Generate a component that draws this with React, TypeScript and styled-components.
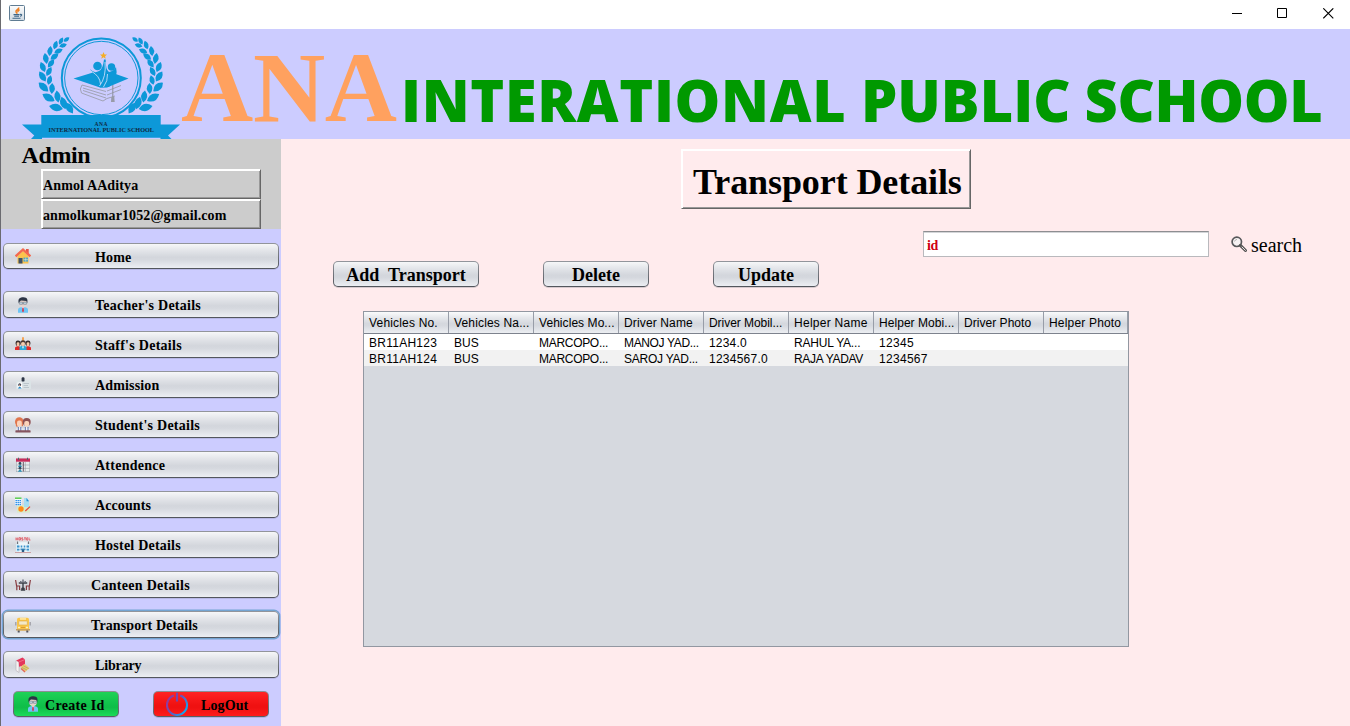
import React from "react";
import styled, { createGlobalStyle, css } from "styled-components";

const serif = `"Liberation Serif", "Times New Roman", serif`;
const sans = `"Liberation Sans", Arial, sans-serif`;

const GlobalStyle = createGlobalStyle`
  * { box-sizing: border-box; }
  body { margin: 0; background: #fff; overflow: hidden; }
`;

const Window = styled.div`
  width: 1350px;
  height: 726px;
  display: flex;
  flex-direction: column;
  background: #fff;
  border-left: 1px solid #6b6b70;
  font-family: ${serif};
  color: #000;
  white-space: pre;
`;

const TitleBar = styled.div`
  height: 29px;
  flex: none;
  display: flex;
  justify-content: space-between;
  padding: 5px 16px 0 8px;
`;

const WindowControls = styled.div`
  display: flex;
  gap: 35px;
  padding-top: 3px;
`;

const Header = styled.header`
  height: 110px;
  flex: none;
  display: flex;
  align-items: flex-start;
  background: #ccccff;
  padding-left: 20px;
`;

const BrandShort = styled.div`
  flex: none;
  width: 220px;
  margin-top: 10px;
  font: bold 100px/98px ${serif};
  letter-spacing: -0.3px;
  color: #ffa15f;
`;

const BrandLong = styled.div`
  flex: none;
  margin-top: 36px;
  font: 800 57.5px/70px "Open Sans", sans-serif;
  word-spacing: -1px;
  color: #009900;
`;

const BrandWord = styled.span<{ $track: number }>`
  letter-spacing: ${(p) => p.$track}px;
`;

const Body = styled.div`
  flex: 1;
  display: flex;
  min-height: 0;
`;

const Sidebar = styled.aside`
  width: 280px;
  flex: none;
  background: #ccccff;
`;

const Profile = styled.div`
  height: 90px;
  background: #cccccc;
  padding-left: 20px;
`;

const Role = styled.div`
  height: 30px;
  padding-left: 0.5px;
  font: bold 24px/32px ${serif};
  letter-spacing: -0.4px;
`;

const bevel = css`
  border-style: solid;
  border-width: 1px;
  border-color: #fff #666 #666 #fff;
  box-shadow: inset 1px 1px 0 #fff, inset -1px -1px 0 #999;
`;

const ProfileField = styled.div`
  ${bevel}
  margin-left: 20px;
  width: 220px;
  height: 30px;
  padding: 2px 0 0 1px;
  font: bold 14px/28px ${serif};
  letter-spacing: 0.12px;
`;

const Nav = styled.nav`
  display: flex;
  flex-direction: column;
  gap: 13px;
  padding: 14px 2px 0;
`;

const steel = css`
  background: linear-gradient(#f6f7f8 0%, #e4e6ea 25%, #d3d6dc 55%, #d5d8de 65%, #eceef3 100%) padding-box,
    linear-gradient(#93969c, #51555c) border-box;
`;

const NavButton = styled.button<{ $first?: boolean; $focused?: boolean }>`
  ${steel}
  width: 276px;
  height: ${(p) => (p.$first ? 26 : 27)}px;
  margin: 0 0 ${(p) => (p.$first ? 9 : 0)}px;
  padding: 0 0 0 11px;
  border: 1px solid transparent;
  border-radius: 5px;
  display: flex;
  align-items: center;
  text-align: left;
  font: bold 14px/24px ${serif};
  color: #000;
  box-shadow: ${(p) => (p.$focused ? "0 0 0 1.4px #73a4d1" : "0 1px 0 rgba(120,120,160,.25)")};
  > span { padding-top: ${(p) => (p.$first ? 3 : 2)}px; }
`;

const NavLabel = styled.span<{ $indent: number; $track: number }>`
  margin-left: ${(p) => p.$indent}px;
  letter-spacing: ${(p) => p.$track}px;
`;

const AccountActions = styled.div`
  display: flex;
  gap: 34px;
  padding: 13px 0 0 12px;
`;

const AccountButton = styled.button<{ $tone: "green" | "red" }>`
  width: ${(p) => (p.$tone === "green" ? 106 : 116)}px;
  height: 26px;
  margin: 0;
  padding: ${(p) => (p.$tone === "green" ? "0 0 0 11px" : "0 0 0 12px")};
  display: flex;
  align-items: center;
  gap: ${(p) => (p.$tone === "green" ? 4 : 12)}px;
  border: 1px solid transparent;
  border-radius: 5px;
  font: bold 14px/26px ${serif};
  letter-spacing: ${(p) => (p.$tone === "green" ? 0.3 : 0.1)}px;
  background: ${(p) =>
      p.$tone === "green"
        ? "linear-gradient(#1fd257, #0fc04a 55%, #10bd49 65%, #1bdc5a)"
        : "linear-gradient(#ff2323, #f01111 55%, #ef1111 65%, #ff1c1c)"} padding-box,
    linear-gradient(#8d8f94, #5a5d63) border-box;
  box-shadow: 0 1px 0 rgba(120, 120, 160, 0.3);
  color: #000;
  span { padding-top: 4px; }
`;

const Content = styled.main`
  flex: 1;
  background: #ffebed;
  display: flex;
  flex-direction: column;
  align-items: flex-start;
`;

const PageTitle = styled.h1`
  ${bevel}
  margin: 10px 0 0 400px;
  width: 290px;
  height: 60px;
  padding: 5px 0 0 11px;
  font: bold 36px/55px ${serif};
  letter-spacing: -0.09px;
`;

const SearchRow = styled.div`
  margin: 22px 0 0 642px;
  height: 26px;
  display: flex;
`;

const SearchField = styled.div`
  width: 286px;
  height: 26px;
  padding: 1px 0 0 3px;
  background: #fff;
  border: 1px solid #b9b9bd;
  border-top-color: #8d8e91;
  box-shadow: inset 0 1px 0 #d4d5d8;
  font: bold 14px/26px ${serif};
  letter-spacing: -0.4px;
  color: #d00012;
`;

const SearchAction = styled.div`
  margin-left: 22px;
  display: flex;
  align-items: flex-start;
  gap: 4px;
  font: 20px/28px ${serif};
  svg { margin-top: 5px; }
`;

const Toolbar = styled.div`
  margin: 4px 0 0 52px;
  display: flex;
  gap: 64px;
`;

const ToolButton = styled.button<{ $wide?: boolean }>`
  ${steel}
  width: ${(p) => (p.$wide ? 146 : 106)}px;
  height: 26px;
  padding: 3px 0 0;
  border: 1px solid transparent;
  border-radius: 5px;
  font: bold 18px/21px ${serif};
  letter-spacing: 0;
  white-space: pre;
  color: #000;
  box-shadow: 0 1px 0 rgba(140, 140, 150, 0.35);
`;

const TableFrame = styled.div`
  margin: 24px 0 0 82px;
  width: 766px;
  height: 336px;
  border: 1px solid #9297a1;
  background: #d6d9df;
  font: 12px/16px ${sans};
`;

const TableHead = styled.div`
  display: grid;
  grid-template-columns: repeat(8, 85px) 84px;
  height: 22px;
  border-bottom: 1px solid #7d828d;
  background: linear-gradient(#fafbfc 0%, #e5e7eb 28%, #d5d8de 55%, #d6d9df 65%, #eceef2 100%);
`;

const HeadCell = styled.div<{ $track: number }>`
  padding: 2px 0 0 5px;
  line-height: 19px;
  border-right: 1px solid #989da8;
  letter-spacing: ${(p) => p.$track}px;
`;

const TableRow = styled.div<{ $alt?: boolean }>`
  display: grid;
  grid-template-columns: repeat(8, 85px) 84px;
  height: 16px;
  background: ${(p) => (p.$alt ? "#f2f2f2" : "#fff")};
`;

const Cell = styled.div<{ $track: number }>`
  padding: 2px 0 0 5px;
  line-height: 14px;
  letter-spacing: ${(p) => p.$track}px;
`;

const Icon = ({ children, size = 16 }: { children: React.ReactNode; size?: number }) => (
  <svg width={size} height={size} viewBox="0 0 16 16" style={{ flex: "none" }}>{children}</svg>
);

const JavaIcon = () => (
  <Icon>
    <defs>
      <linearGradient id="jbg" x1="0" y1="0" x2="0" y2="1">
        <stop offset="0" stopColor="#fdfdfd" /><stop offset="1" stopColor="#cfd9e2" />
      </linearGradient>
    </defs>
    <rect x=".5" y=".5" width="15" height="15" rx="1" fill="url(#jbg)" stroke="#5f7c93" />
    <path d="M9.8 2.5C10 4.600 6.300 4.800 7 6.800 7.300 7.800 8 8 8 8.800M10.600 4.800C8.800 5.500 8.600 6.200 9.200 7.200" fill="none" stroke="#ee7f22" strokeWidth="1.500" />
    <path d="M4.500 9.600H10.500M5.200 11.300H10M11 9.500C13.500 8.800 13 11 11 11.300M3.500 13.200H11.500" fill="none" stroke="#3d6587" strokeWidth="1.100" />
  </Icon>
);

const HomeIcon = () => (
  <Icon>
    <rect x="11" y="1" width="2.700" height="5" fill="#e2574c" />
    <path d="M2.500 8 8 3 13.500 8V15.500H2.500Z" fill="#fbc34c" />
    <path d="M.6 8.300 8 1.600 15.400 8.300" fill="none" stroke="#f4694f" strokeWidth="2.300" />
    <rect x="3.500" y="10" width="4" height="5.500" fill="#3f5266" />
    <rect x="8.500" y="9.600" width="4.500" height="4" fill="#4aa7cf" />
    <path d="M10.700 9.600V13.600M8.500 11.600H13" stroke="#fff0c0" strokeWidth=".5" />
  </Icon>
);

const TeacherIcon = () => (
  <Icon>
    <path d="M3 15.800V12.500Q3.200 10.300 8 10 12.800 10.300 13 12.500V15.800Z" fill="#6cc5f5" />
    <path d="M6.300 9.500H9.700L8 12Z" fill="#fff" />
    <circle cx="8" cy="6" r="3.900" fill="#e6d3cc" />
    <path d="M3.800 6.500C2.500 1.500 5 .2 8.500.2 12.500.2 13 3 12.200 6.500L11.300 4 6 3.500 4.800 4.500Z" fill="#2c3545" />
    <path d="M4.600 5.200H7.400V7.300H4.600ZM8.600 5.200H11.400V7.300H8.600ZM7.400 6H8.600" fill="#c7dbe4" stroke="#5b6f82" strokeWidth=".5" />
    <path d="M7.400 10.500H8.600L9 14 8 15.500 7 14Z" fill="#d83b4f" />
  </Icon>
);

const StaffIcon = () => (
  <Icon>
    <path d="M7.200.300H8.800V5H7.200Z" fill="#f59331" />
    <path d="M0 13V10.500Q3 7.500 6 10.500V13ZM10 13V10.500Q13 7.500 16 10.500V13Z" fill="#e22c2c" />
    <rect x=".6" y="3.500" width="4.800" height="5.500" rx="2.200" fill="#3b3030" />
    <rect x="10.600" y="3.500" width="4.800" height="5.500" rx="2.200" fill="#3b3030" />
    <rect x="1.700" y="5.200" width="2.700" height="4" rx="1.200" fill="#f3c7a9" />
    <rect x="11.700" y="5.200" width="2.700" height="4" rx="1.200" fill="#f3c7a9" />
    <path d="M4.500 13V10Q8 7.500 11.500 10V13Z" fill="#2aa9d8" />
    <circle cx="8" cy="6" r="2.800" fill="#4b3a36" /><circle cx="8" cy="7" r="2" fill="#f6cfb0" />
    <path d="M7 9.500H9L8 12Z" fill="#fff" />
  </Icon>
);

const AdmissionIcon = () => (
  <Icon>
    <rect x="1" y="3.200" width="15" height="9" rx=".8" fill="#dbe3e6" />
    <rect x="6.600" y=".2" width="2.900" height="4.400" rx="1.200" fill="#2d3545" />
    <rect x="2.500" y="5.500" width="4.500" height="6" fill="#fff" />
    <circle cx="4.700" cy="7.800" r="1.500" fill="#353d50" /><circle cx="4.700" cy="8.300" r=".8" fill="#efb99b" />
    <path d="M2.800 11.500Q4.700 8.200 6.700 11.500Z" fill="#2588c5" />
    <path d="M8.500 6.500H14M8.500 8.500H13M8.500 10.500H14" stroke="#b2bec4" strokeWidth=".8" />
  </Icon>
);

const StudentsIcon = () => (
  <Icon>
    <circle cx="4.300" cy="4.600" r="4.300" fill="#e1764d" /><circle cx="11.700" cy="5" r="4" fill="#8d5053" />
    <path d="M.5 4.500 1 9.500H3V5ZM8 5V9L6.500 9.500Z" fill="#e1764d" />
    <rect x="2" y="3.600" width="4.800" height="5.900" rx="2" fill="#fbd3ba" />
    <rect x="9.200" y="4" width="5" height="5.500" rx="2" fill="#fbd3ba" />
    <path d="M1.500 14V11.500Q4.400 8.500 7.500 11.500V14ZM8.500 14V11.500Q11.700 8.500 14.500 11.500V14Z" fill="#eef2fa" />
    <path d="M3.300 10V14M5.800 10V14M10.300 10V14M13 10V14" stroke="#364f95" strokeWidth=".8" />
    <rect x=".4" y="13.300" width="15.200" height="2.300" rx=".6" fill="#85545f" />
  </Icon>
);

const AttendanceIcon = () => (
  <Icon>
    <rect x="1.300" y="2" width="13.400" height="12.700" fill="#e7ebed" stroke="#a5acb3" strokeWidth=".6" />
    <rect x="1" y="1.500" width="14" height="3.200" fill="#c72c5b" />
    <path d="M3.500.7V3M12.500.7V3" stroke="#57606b" />
    <path d="M5.500 5V14.500M10.300 5V14.500M1.500 8H14.500M1.500 11.400H14.500" stroke="#969ea6" strokeWidth=".6" />
    <circle cx="5" cy="6.400" r="1.400" fill="#31475b" /><path d="M2.900 10Q5 6 7.100 10Z" fill="#2a8fb4" />
    <circle cx="5" cy="11.200" r="1.400" fill="#31475b" /><path d="M2.900 14.700Q5 10.600 7.100 14.700Z" fill="#2a8fb4" />
    <path d="M8.300 5V14.500" stroke="#5d4552" strokeWidth=".9" />
  </Icon>
);

const AccountsIcon = () => (
  <Icon>
    <path d="M2 8H15V15.500H2Z" fill="#d7efbf" opacity=".8" />
    <rect x="0" y=".5" width="6.500" height="8" fill="#f5fbff" />
    <rect x="0" y=".4" width="6.500" height="1.600" fill="#61ce57" />
    <path d="M.5 3.600H6M.5 5.600H6M.5 7.600H6" stroke="#1e86e8" strokeWidth="1.200" strokeDasharray="1.400 .6" />
    <path d="M9 1H12L14 4V10H9Z" fill="#a5ddf2" /><path d="M11.500 1 14 4.200H11.500Z" fill="#238bd8" />
    <circle cx="6" cy="12" r="2.700" fill="#ff8b16" />
    <path d="M10.300 14 15 9.600" stroke="#e7483d" strokeWidth="1.300" />
  </Icon>
);

const HostelIcon = () => (
  <Icon>
    <path d="M1 .5V3.300M2.800.5V3.300M1 2H2.800M4 .7H5.500V3H4ZM8 .8H6.700V1.900H8V3.100H6.600M9 .8H11M10 .8V3.200M13 .8H11.700V3.100H13M11.700 2H13M14 .5V3H15.500" stroke="#e04c58" strokeWidth=".8" fill="none" />
    <path d="M2.500 4.500V8M13.500 4.500V8" stroke="#6c737b" />
    <rect x="1" y="7" width="14" height="8.300" fill="#d6edf8" /><rect x="4" y="5.200" width="8" height="10" fill="#edf6fa" />
    <path d="M2 9.500H4.500M5.700 9.500H7.300M8.700 9.500H10.300M11.500 9.500H14M2 12.700H4.500M5.500 12.300H10.500M11.500 12.700H14" stroke="#3d93cc" strokeWidth="1.800" />
    <path d="M6.800 15V12.500H9.200V15Z" fill="#295d85" /><path d="M0 15.500H16" stroke="#b65f61" strokeWidth=".5" />
  </Icon>
);

const CanteenIcon = () => (
  <Icon>
    <path d="M.6 3 1.600 9H4.600V13M1.800 9V13.300M15.400 3 14.400 9H11.400V13M14.200 9V13.300" stroke="#873b40" strokeWidth="1.200" fill="none" />
    <path d="M3.800 6H12.200M8 6V12.500M5.800 13H10.200M6.500 12 8 10.500 9.500 12" stroke="#3b3e46" strokeWidth="1.400" fill="none" />
    <path d="M5.800 6V4M8 6V2.500M10.200 6V4" stroke="#646874" strokeWidth="1.400" />
  </Icon>
);

const BusIcon = () => (
  <Icon>
    <rect x="2" y=".8" width="12" height="12.800" rx="1.800" fill="#fac549" />
    <rect x="5" y="1.300" width="6" height="1.300" fill="#fff0bb" />
    <rect x="3.700" y="4" width="8.600" height="4" rx=".6" fill="#f3e9c8" stroke="#dfa93c" strokeWidth=".6" />
    <path d="M.8 5V8.500M15.200 5V8.500" stroke="#9a9aa2" strokeWidth="1.200" />
    <path d="M3 10.500H5M11 10.500H13" stroke="#fff1b5" strokeWidth="1.300" /><path d="M6 10.500H10" stroke="#db9d31" strokeWidth="1.100" />
    <rect x="1" y="12" width="14" height="1.500" fill="#c9a05c" /><path d="M3.700 13.500V15.400M12.300 13.500V15.400" stroke="#55565e" strokeWidth="2" />
  </Icon>
);

const LibraryIcon = () => (
  <Icon>
    <path d="M1 3.500 4 5V15.500L1 13.500Z" fill="#f4f2f2" stroke="#aaa3a8" strokeWidth=".5" />
    <path d="M1.200 3.500 7.500.500 10 2.500V8L4 9.800 3.800 5Z" fill="#e4375c" /><path d="M3.800 5 10 2.500" stroke="#f78da0" strokeWidth=".6" />
    <path d="M5.500 10 9.500 6.800 14.500 11.200 9.500 15.200Z" fill="#f5be73" />
    <path d="M7 10.500 12 13M8.300 8.800 13.500 11.500" stroke="#a7c661" strokeWidth="1" /><path d="M6 11.500 10 15" stroke="#dd665a" strokeWidth="1.200" />
  </Icon>
);

const PowerIcon = () => (
  <svg width="23" height="24" viewBox="0 0 23 24" style={{ flex: "none" }}>
    <defs>
      <linearGradient id="pw" x1="0" y1="0" x2="1" y2=".7">
        <stop offset="0" stopColor="#a52d93" /><stop offset=".5" stopColor="#6b51b8" /><stop offset="1" stopColor="#12a7ef" />
      </linearGradient>
    </defs>
    <path d="M7.800 3.500A10 10 0 1 0 14.200 3.500" fill="none" stroke="url(#pw)" strokeWidth="2.100" />
    <path d="M11 .6V9.500" stroke="#7545ad" strokeWidth="2.200" />
  </svg>
);

const SearchIcon = () => (
  <Icon>
    <circle cx="5.800" cy="5.800" r="4.700" fill="#f7f2f3" stroke="#58585b" strokeWidth="1.700" />
    <path d="M3.500 5.500Q4 3.500 6 3.400" stroke="#aaa" fill="none" strokeWidth=".9" />
    <path d="M9.400 9.400 14.500 14.500" stroke="#555" strokeWidth="3" strokeLinecap="round" />
    <path d="M11 11 14.400 14.400" stroke="#e6dede" strokeWidth="1" strokeLinecap="round" />
  </Icon>
);

// Leaves of the left laurel branch: x, y, length, rotation in degrees.
const leaves: [number, number, number, number][] = [
  [66.5, 39.5, 7, -35], [61, 41, 8, -62], [63, 45.500, 8, -15], [55.500, 45, 9, -72], [58.500, 51, 9, -22],
  [50, 51, 10, -82], [54.500, 56.500, 10, -38], [45.800, 58.500, 11, -100], [51, 63.500, 10, -52],
  [42.800, 67, 11, -112], [49, 71.500, 10, -62], [42.500, 76.500, 12, -122], [49.500, 80, 10, -75],
  [43.500, 87, 13, -138], [52, 88.500, 11, -88], [48.500, 97.500, 14, -150], [57.500, 96.500, 12, -98],
  [56, 107.500, 14, -168], [63.500, 103, 13, -108], [69.500, 108, 13, -122],
];

const Laurel = () => (
  <g fill="#0d98d8">
    {leaves.map(([x, y, l, r], i) => (
      <path key={i} transform={`translate(${x} ${y}) rotate(${r})`} d={`M${-l / 2} 0Q0 ${-l * 0.52} ${l / 2} 0Q0 ${l * 0.52} ${-l / 2} 0Z`} />
    ))}
  </g>
);

const SchoolLogo = () => (
  <svg width="160" height="110" viewBox="21 29 160 110" style={{ flex: "none" }}>
    <Laurel />
    <g transform="translate(201.600 0) scale(-1 1)"><Laurel /></g>
    <circle cx="101.300" cy="78" r="39.500" fill="#ccccff" stroke="#0d98d8" strokeWidth="2" />
    <circle cx="101.300" cy="78" r="36.700" fill="none" stroke="#0d98d8" strokeWidth="1" />
    <path d="M82 85Q79 89 81.500 93L103 101 107 98.500M107 91 121 85.500M107 95 121 89.500M107 98.500 115 96M82 85 106 91.500M83 88 106 95M83 90.500 106 98" fill="none" stroke="#9c9ead" strokeWidth=".9" />
    <path d="M112.800 85V98" stroke="#8f929f" strokeWidth="1.100" /><path d="M111.300 97H114.300L114.700 102H111Z" fill="#989ba8" />
    <path d="M73.500 78.500 93 72.500 102 80 110 72 128.500 78.500 107 87.500 100 87.500Z" fill="#0d98d8" />
    <circle cx="97.500" cy="66" r="4.300" fill="#0d98d8" /><circle cx="111.500" cy="67" r="3.700" fill="#0d98d8" />
    <path d="M90 69Q94 74 99 71 103 69 104 59.500H105.700Q105.500 70 109 72 114 71 116 67 119 78 109 87L100 87.500Q99 82 90 69Z" fill="#0d98d8" />
    <path d="M105 62Q106.500 77 99.500 86M107.500 74Q108 81 103.500 87M91 71Q100 76 100.500 84" fill="none" stroke="#d9e3ff" strokeWidth=".8" />
    <path d="M103.500 52 104.500 54.400 107 54.600 105.100 56.200 105.700 58.700 103.500 57.300 101.300 58.700 101.900 56.200 100 54.600 102.500 54.400Z" fill="#f4ad27" />
    <path d="M22 124.500H41.300V115H160.700V124.500H180L168 135.500 171.500 139H160.500V137.700H42V139H31L34.300 135.500Z" fill="#0d98d8" />
    <text x="101" y="125.500" textAnchor="middle" textLength="13" fontFamily={serif} fontWeight="bold" fontSize="5.500" fill="#10283f">ANA</text>
    <text x="48.500" y="132" textLength="105.500" lengthAdjust="spacingAndGlyphs" fontFamily={serif} fontWeight="bold" fontSize="6.300" fill="#10283f">INTERNATIONAL PUBLIC SCHOOL</text>
  </svg>
);

const navItems: { label: string; icon: React.ReactNode; indent?: number; track?: number }[] = [
  { label: "Home", icon: <HomeIcon /> },
  { label: "Teacher's Details", icon: <TeacherIcon />, track: 0.25 },
  { label: "Staff's Details", icon: <StaffIcon />, track: 0.27 },
  { label: "Admission", icon: <AdmissionIcon /> },
  { label: "Student's Details", icon: <StudentsIcon />, track: 0.25 },
  { label: "Attendence", icon: <AttendanceIcon />, track: 0.25 },
  { label: "Accounts", icon: <AccountsIcon />, track: 0.1 },
  { label: "Hostel Details", icon: <HostelIcon />, track: 0.22 },
  { label: "Canteen Details", icon: <CanteenIcon />, indent: 60, track: 0.3 },
  { label: "Transport Details", icon: <BusIcon />, indent: 60, track: 0.1 },
  { label: "Library", icon: <LibraryIcon />, track: -0.15 },
];

const columns: [string, number][] = [
  ["Vehicles No.", 0.18], ["Vehicles Na...", 0.16], ["Vehicles Mo...", 0.06], ["Driver Name", 0.14], ["Driver Mobil...", -0.05],
  ["Helper Name", 0.27], ["Helper Mobi...", 0.05], ["Driver Photo", 0.04], ["Helper Photo", 0.18],
];

const rows: [string, number][][] = [
  [["BR11AH123", 0.25], ["BUS", 0], ["MARCOPO...", -0.3], ["MANOJ YAD...", -0.35], ["1234.0", 0.2], ["RAHUL YA...", -0.2], ["12345", 0.3]],
  [["BR11AH124", 0.25], ["BUS", 0], ["MARCOPO...", -0.3], ["SAROJ YAD...", -0.25], ["1234567.0", 0.25], ["RAJA YADAV", -0.3], ["1234567", 0.3]],
];

export default function App() {
  return (
    <>
      <GlobalStyle />
      <Window>
        <TitleBar>
          <JavaIcon />
          <WindowControls>
            <svg width="11" height="11"><path d="M1 5.500H11" stroke="#000" /></svg>
            <svg width="11" height="11"><path d="M.5.5H9.500V9.500H.5Z" fill="none" stroke="#000" /></svg>
            <svg width="11" height="11"><path d="M.3.3 10.300 10.300M10.300.3.3 10.300" stroke="#000" strokeWidth="1.100" /></svg>
          </WindowControls>
        </TitleBar>
        <Header>
          <SchoolLogo />
          <BrandShort>ANA</BrandShort>
          <BrandLong>
            <BrandWord $track={0.68}>INTERATIONAL </BrandWord>
            <BrandWord $track={0.04}>PUBLIC </BrandWord>
            <BrandWord $track={-0.3}>SCHOOL</BrandWord>
          </BrandLong>
        </Header>
        <Body>
          <Sidebar>
            <Profile>
              <Role>Admin</Role>
              <ProfileField>Anmol AAditya</ProfileField>
              <ProfileField>anmolkumar1052@gmail.com</ProfileField>
            </Profile>
            <Nav>
              {navItems.map((item, i) => (
                <NavButton key={item.label} $first={i === 0} $focused={item.label === "Transport Details"}>
                  {item.icon}
                  <NavLabel $indent={item.indent ?? 64} $track={item.track ?? 0.15}>{item.label}</NavLabel>
                </NavButton>
              ))}
            </Nav>
            <AccountActions>
              <AccountButton $tone="green"><TeacherIcon /><span>Create Id</span></AccountButton>
              <AccountButton $tone="red"><PowerIcon /><span>LogOut</span></AccountButton>
            </AccountActions>
          </Sidebar>
          <Content>
            <PageTitle>Transport Details</PageTitle>
            <SearchRow>
              <SearchField>id</SearchField>
              <SearchAction><SearchIcon />search</SearchAction>
            </SearchRow>
            <Toolbar>
              <ToolButton $wide>Add  Transport</ToolButton>
              <ToolButton>Delete</ToolButton>
              <ToolButton>Update</ToolButton>
            </Toolbar>
            <TableFrame>
              <TableHead>
                {columns.map(([label, track]) => <HeadCell key={label} $track={track}>{label}</HeadCell>)}
              </TableHead>
              {rows.map((row, i) => (
                <TableRow key={i} $alt={i % 2 === 1}>
                  {row.map(([text, track], j) => <Cell key={j} $track={track}>{text}</Cell>)}
                </TableRow>
              ))}
            </TableFrame>
          </Content>
        </Body>
      </Window>
    </>
  );
}
